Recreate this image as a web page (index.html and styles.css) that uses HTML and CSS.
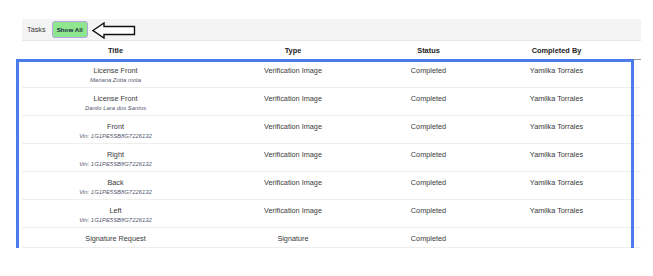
FILE: index.html
```html
<!DOCTYPE html>
<html lang="en">
<head>
  <meta charset="UTF-8">
  <meta name="viewport" content="width=device-width, initial-scale=1.0">
  <title>Tasks</title>
  <link rel="stylesheet" href="styles.css">
</head>
<body>
  <div class="page">
    <div class="toolbar">
      <span class="toolbar-label">Tasks</span>
      <button class="show-all">Show All</button>
      <svg class="arrow" width="44" height="17" viewBox="0 0 44 17">
        <polygon points="1,8.5 12,1 12,4.5 42.5,4.5 42.5,12.5 12,12.5 12,16" fill="#fff" stroke="#111" stroke-width="1.4" stroke-linejoin="miter"/>
      </svg>
    </div>
    <table class="tasks">
      <colgroup>
        <col style="width:187px">
        <col style="width:168px">
        <col style="width:103px">
        <col style="width:161px">
      </colgroup>
      <thead>
        <tr>
          <th>Title</th>
          <th>Type</th>
          <th>Status</th>
          <th class="last">Completed By</th>
        </tr>
      </thead>
      <tbody>
        <tr>
          <td class="title">License Front<span class="sub">Mariana Zotta mota</span></td>
          <td>Verification Image</td>
          <td>Completed</td>
          <td class="last">Yamilka Torrales</td>
        </tr>
        <tr>
          <td class="title">License Front<span class="sub">Danilo Lara dos Santos</span></td>
          <td>Verification Image</td>
          <td>Completed</td>
          <td class="last">Yamilka Torrales</td>
        </tr>
        <tr>
          <td class="title">Front<span class="sub">Vin: 1G1PE5SB8G7226132</span></td>
          <td>Verification Image</td>
          <td>Completed</td>
          <td class="last">Yamilka Torrales</td>
        </tr>
        <tr>
          <td class="title">Right<span class="sub">Vin: 1G1PE5SB8G7226132</span></td>
          <td>Verification Image</td>
          <td>Completed</td>
          <td class="last">Yamilka Torrales</td>
        </tr>
        <tr>
          <td class="title">Back<span class="sub">Vin: 1G1PE5SB8G7226132</span></td>
          <td>Verification Image</td>
          <td>Completed</td>
          <td class="last">Yamilka Torrales</td>
        </tr>
        <tr>
          <td class="title">Left<span class="sub">Vin: 1G1PE5SB8G7226132</span></td>
          <td>Verification Image</td>
          <td>Completed</td>
          <td class="last">Yamilka Torrales</td>
        </tr>
        <tr>
          <td class="title">Signature Request</td>
          <td>Signature</td>
          <td>Completed</td>
          <td class="last"></td>
        </tr>
      </tbody>
    </table>
    <div class="highlight"></div>
  </div>
</body>
</html>
```

FILE: styles.css
```css
body {
  margin: 0;
  background: #fff;
  font-family: 'Liberation Sans', Arial, sans-serif;
  color: #3a3a3a;
}
.page {
  position: relative;
  padding: 19px 12px 0 22px;
}
.toolbar {
  display: flex;
  align-items: center;
  height: 21px;
  padding-left: 5px;
  background: #f4f4f4;
  border-bottom: 1px solid #e8e8e8;
}
.toolbar-label {
  font-size: 7.3px;
  color: #3a3a3a;
}
.show-all {
  margin-left: 6px;
  height: 17px;
  width: 36px;
  padding: 0;
  font-family: inherit;
  font-size: 6.2px;
  font-weight: bold;
  color: #1c2a44;
  background: #8fe68f;
  border: 1.5px solid #b3a4e2;
  border-radius: 3px;
}
.arrow {
  margin-left: 4px;
  margin-top: 2px;
}
.tasks {
  width: 619px;
  table-layout: fixed;
  border-collapse: collapse;
}
.tasks th {
  padding: 5px 0 3px;
  line-height: 10px;
  font-size: 7.4px;
  font-weight: bold;
  color: #222;
  text-align: center;
  border-bottom: 1px solid #999;
}
.tasks td {
  padding: 6px 0 3px;
  line-height: 10px;
  font-size: 7.3px;
  color: #3a3a3a;
  text-align: center;
  vertical-align: top;
  border-bottom: 1px solid #eee;
}
.tasks .last {
  padding-right: 8px;
}
.sub {
  display: block;
  line-height: 8px;
  font-size: 5.9px;
  font-style: italic;
  color: #55586e;
}
.highlight {
  position: absolute;
  left: 16px;
  top: 59px;
  width: 618px;
  height: 200px;
  box-sizing: border-box;
  border: 3px solid #4c7cec;
}
```
